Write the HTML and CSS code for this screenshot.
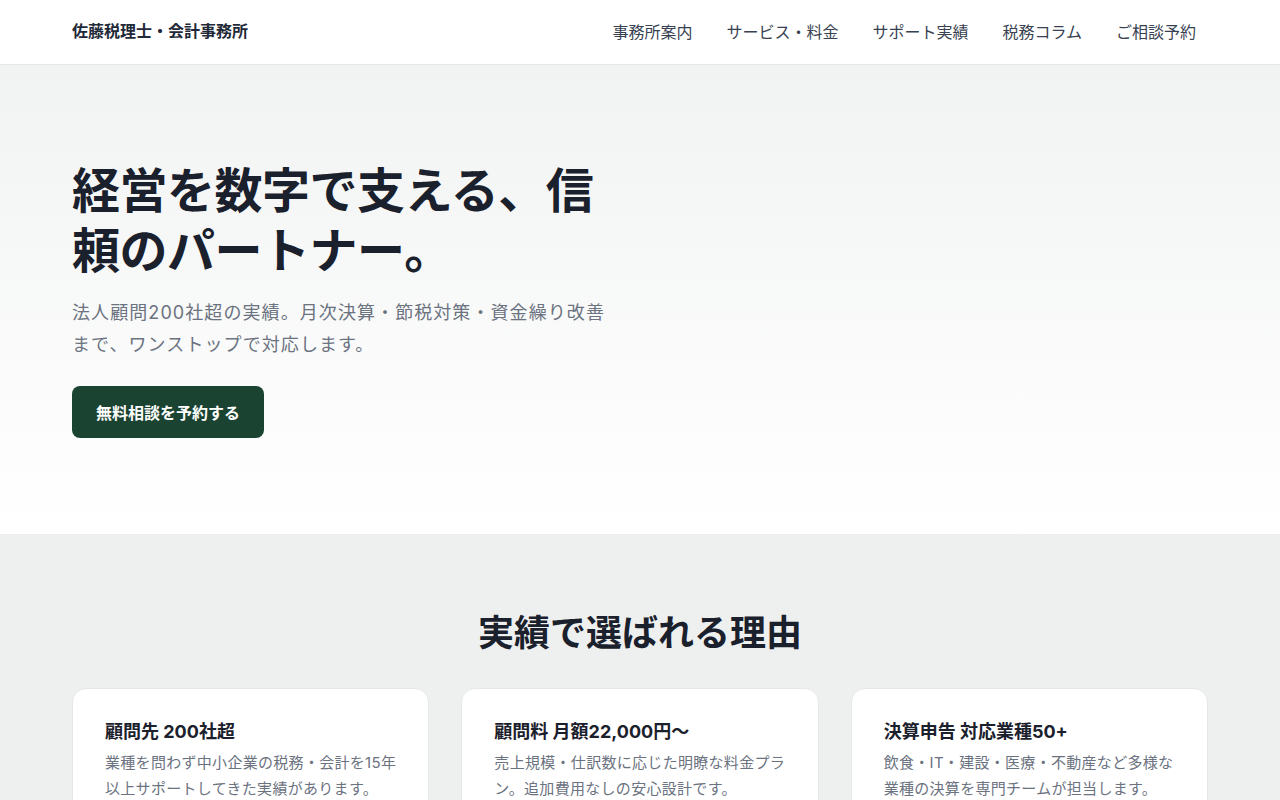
FILE: index.html
```html
<!DOCTYPE html>
<html lang="ja">
<head>
  <meta charset="UTF-8" />
  <meta name="viewport" content="width=device-width, initial-scale=1.0"/>
  <title>佐藤税理士・会計事務所</title>
  <link rel="stylesheet" href="styles.css">
</head>
<body>

  <header class="site-header">
    <div class="container header-inner">
      <a class="logo" href="#">佐藤税理士・会計事務所</a>
      <nav class="nav">
        <a href="#">事務所案内</a>
        <a href="#">サービス・料金</a>
        <a href="#">サポート実績</a>
        <a href="#">税務コラム</a>
        <a href="#">ご相談予約</a>
      </nav>
    </div>
  </header>

  <section class="hero">
    <div class="container">
      <div class="hero-content">
        <h1>経営を数字で支える、信頼のパートナー。</h1>
        <p class="lead">法人顧問200社超の実績。月次決算・節税対策・資金繰り改善まで、ワンストップで対応します。</p>
        <a class="btn" href="#">無料相談を予約する</a>
      </div>
    </div>
  </section>

  <section class="reasons">
    <div class="container">
      <h2>実績で選ばれる理由</h2>
      <div class="cards">
        <div class="card">
          <h3>顧問先 200社超</h3>
          <p>業種を問わず中小企業の税務・会計を15年以上サポートしてきた実績があります。</p>
        </div>
        <div class="card">
          <h3>顧問料 月額22,000円〜</h3>
          <p>売上規模・仕訳数に応じた明瞭な料金プラン。追加費用なしの安心設計です。</p>
        </div>
        <div class="card">
          <h3>決算申告 対応業種50+</h3>
          <p>飲食・IT・建設・医療・不動産など多様な業種の決算を専門チームが担当します。</p>
        </div>
      </div>
    </div>
  </section>

</body>
</html>
```

FILE: styles.css
```css
* {
  box-sizing: border-box;
  margin: 0;
  padding: 0;
}

body {
  font-family: Inter, "Noto Sans CJK JP", sans-serif;
  color: #1a202c;
  background-color: #eef0ef;
}

a {
  color: inherit;
  text-decoration: none;
}

.container {
  max-width: 1280px;
  padding: 0 72px;
  margin: 0 auto;
}

/* header */
.site-header {
  background-color: #fff;
  border-bottom: 1px solid #e5e7eb;
}

.header-inner {
  height: 64px;
  display: flex;
  align-items: center;
  justify-content: space-between;
}

.logo {
  font-size: 16px;
  line-height: 22px;
  font-weight: 700;
  color: #1f2937;
  margin-top: -2px;
}

.nav {
  display: flex;
  gap: 10px;
}

.nav a {
  font-size: 16px;
  line-height: 22px;
  color: #374151;
  padding: 8px 12px;
}

/* hero */
.hero {
  background: linear-gradient(180deg, #f1f3f2 0%, #ffffff 100%);
  padding: 96px 0;
}

.hero-content {
  max-width: 620px;
}

.hero h1 {
  max-width: 560px;
  font-size: 48px;
  line-height: 60px;
  font-weight: 700;
  letter-spacing: -0.01em;
  margin-bottom: 16px;
}

.lead {
  max-width: 548px;
  font-size: 18px;
  line-height: 32px;
  letter-spacing: 0.06em;
  color: #6b7280;
  margin-bottom: 25px;
}

.btn {
  display: inline-flex;
  align-items: center;
  height: 52px;
  padding: 0 24px;
  border-radius: 8px;
  background-color: #1b4332;
  color: #fff;
  font-size: 16px;
  font-weight: 700;
}

/* reasons */
.reasons {
  padding-top: 72px;
  padding-bottom: 64px;
}

.reasons h2 {
  text-align: center;
  font-size: 36px;
  line-height: 54px;
  font-weight: 700;
  margin-bottom: 28px;
}

.cards {
  display: grid;
  grid-template-columns: repeat(3, 1fr);
  gap: 32px;
}

.card {
  background-color: #fff;
  border: 1px solid #e5e7eb;
  border-radius: 14px;
  padding: 30px 32px;
}

.card h3 {
  font-size: 18px;
  line-height: 25px;
  font-weight: 700;
  margin-bottom: 6px;
}

.card p {
  font-size: 15px;
  line-height: 26px;
  letter-spacing: 0.02em;
  color: #6b7280;
}
```
